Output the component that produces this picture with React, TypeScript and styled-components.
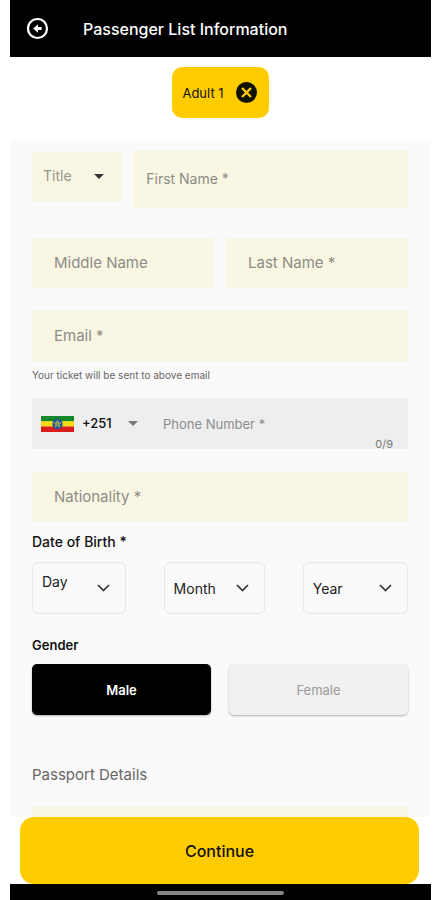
import React, { useState } from "react";
import styled, { createGlobalStyle } from "styled-components";

const GlobalStyle = createGlobalStyle`
  * { box-sizing: border-box; }
  body { margin: 0; background: #ffffff; }
  body, button, input, select { font-family: Inter, "Liberation Sans", sans-serif; }
  button { border: 0; padding: 0; cursor: pointer; }
`;

const Screen = styled.div`
  display: flex;
  flex-direction: column;
  height: 100vh;
  margin: 0 8px 0 10px;
  background: #ffffff;
`;

const Header = styled.header`
  display: flex;
  align-items: center;
  gap: 34px;
  flex: none;
  height: 57px;
  padding: 0 16px;
  background: #000000;
  color: #ffffff;
`;

const BackButton = styled.button`
  display: flex;
  background: none;
  color: #ffffff;
`;

const PageTitle = styled.h1`
  margin: 0;
  font-size: 16px;
  font-weight: 500;
  line-height: 20px;
`;

const Passengers = styled.nav`
  display: flex;
  justify-content: center;
  flex: none;
  padding: 10px 0 22px;
`;

const PassengerChip = styled.div`
  display: flex;
  align-items: center;
  gap: 12px;
  height: 51px;
  padding: 0 12px 0 10px;
  border-radius: 10px;
  background: #ffcc00;
  color: #111111;
  font-size: 13px;
`;

const RemoveButton = styled.button`
  display: flex;
  background: none;
`;

const Form = styled.form`
  flex: 1;
  min-height: 0;
  overflow-y: auto;
  scrollbar-width: none;
  padding: 10px 23px 0 22px;
  background: #fafafa;
`;

const Row = styled.div<{ $gap: number; $top?: number }>`
  display: flex;
  align-items: flex-start;
  gap: ${(p) => p.$gap}px;
  margin-top: ${(p) => p.$top ?? 0}px;
`;

const TextField = styled.input<{ $height?: number; $size?: number; $top?: number; $inset?: number }>`
  display: block;
  flex: 1;
  width: 100%;
  min-width: 0;
  height: ${(p) => p.$height ?? 50}px;
  margin-top: ${(p) => p.$top ?? 0}px;
  padding: 0 ${(p) => p.$inset ?? 22}px 2px;
  border: 0;
  border-radius: 2px;
  background: #f9f6e3;
  color: #222222;
  font-size: ${(p) => p.$size ?? 15}px;
  &::placeholder { color: #8d8c87; opacity: 1; }
`;

/* The native list and its arrow share one grid cell. */
const Picker = styled.div`
  display: grid;
  align-items: center;
  & > * { grid-area: 1 / 1; }
  & > svg { justify-self: end; pointer-events: none; }
`;

const TitlePicker = styled(Picker)`
  flex: 0 0 24%;
  margin-top: 2px;
  padding: 0 18px 2px 0;
  border-radius: 2px;
  background: #f9f6e3;
`;

const PlainSelect = styled.select<{ $strong?: boolean }>`
  appearance: none;
  width: 100%;
  height: 48px;
  padding: 0 0 2px ${(p) => (p.$strong ? 0 : 11)}px;
  border: 0;
  background: transparent;
  color: ${(p) => (p.$strong ? "#111111" : "#96958e")};
  font-size: ${(p) => (p.$strong ? 13 : 14)}px;
  font-weight: ${(p) => (p.$strong ? 500 : 400)};
`;

const Hint = styled.p`
  margin: 7px 0 0;
  color: #666666;
  font-size: 10px;
  line-height: 12px;
`;

const PhoneField = styled.div`
  display: flex;
  align-items: center;
  height: 51px;
  margin-top: 17px;
  padding-left: 9px;
  background: #eeeeee;
`;

const CodePicker = styled(Picker)`
  width: 56px;
  margin-left: 8px;
`;

const PhoneInput = styled.input`
  flex: 1;
  min-width: 0;
  height: 51px;
  margin-left: 25px;
  padding: 0;
  border: 0;
  background: transparent;
  font-size: 13px;
  &::placeholder { color: #8c8c8c; opacity: 1; }
`;

const Counter = styled.span`
  align-self: flex-end;
  padding-right: 15px;
  color: #777777;
  font-size: 11px;
  line-height: 10px;
`;

const Label = styled.h2`
  margin: 0;
  color: #111111;
  font-size: 14px;
  font-weight: 500;
  line-height: 20px;
`;

const DobLabel = styled(Label)`
  margin-top: 10px;
`;

const GenderLabel = styled(Label)`
  margin-top: 21px;
  font-size: 13px;
  font-weight: 600;
`;

const PassportHeading = styled(Label)`
  margin: 50px 0 21px;
  color: #666666;
  font-size: 15px;
  font-weight: 400;
`;

const DateRow = styled.div`
  display: flex;
  justify-content: space-between;
  margin-top: 10px;
`;

const DatePicker = styled(Picker)<{ $share: number }>`
  flex: 0 0 ${(p) => p.$share}%;
  height: 52px;
  padding-right: 15px;
  border: 1px solid #e6e6e6;
  border-radius: 6px;
`;

const DateSelect = styled.select<{ $raised?: boolean }>`
  appearance: none;
  width: 100%;
  height: 50px;
  padding: 0 0 ${(p) => (p.$raised ? 14 : 0)}px 9px;
  border: 0;
  background: transparent;
  color: #222222;
  font-size: 14px;
`;

const GenderButton = styled.button<{ $active: boolean }>`
  flex: 1;
  height: 51px;
  border-radius: 5px;
  background: ${(p) => (p.$active ? "#000000" : "#f1f1f1")};
  color: ${(p) => (p.$active ? "#ffffff" : "#9a9a9a")};
  font-size: 13px;
  font-weight: ${(p) => (p.$active ? 600 : 400)};
  box-shadow: 0 1px 2px rgba(0, 0, 0, 0.3);
`;

const Footer = styled.footer`
  flex: none;
  padding: 0 12px 0 10px;
`;

const ContinueButton = styled.button`
  display: block;
  width: 100%;
  height: 67px;
  border-radius: 14px;
  background: #ffcc00;
  color: #111111;
  font-size: 16px;
  font-weight: 500;
`;

const SystemBar = styled.div`
  display: flex;
  justify-content: center;
  flex: none;
  height: 16px;
  padding-top: 7px;
  background: #000000;
`;

const HomeHandle = styled.div`
  width: 30%;
  height: 4px;
  border-radius: 2px;
  background: #858585;
`;

const BackIcon = () => (
  <svg width="23" height="23" viewBox="0 0 23 23" fill="none" aria-hidden="true">
    <circle cx="11.5" cy="11.5" r="9.5" stroke="currentColor" strokeWidth="2.2" />
    <path d="M7.2 11.5 12 7.2v2.9h3.6v2.8H12v2.9z" fill="currentColor" />
  </svg>
);

const RemoveIcon = () => (
  <svg width="21" height="21" viewBox="0 0 21 21" aria-hidden="true">
    <circle cx="10.5" cy="10.5" r="10.5" fill="#111100" />
    <path d="m6 6 9 9m0-9-9 9" stroke="#ffcc00" strokeWidth="2.4" />
  </svg>
);

const Triangle = ({ color }: { color: string }) => (
  <svg width="10" height="5" viewBox="0 0 10 5" aria-hidden="true">
    <path d="M0 0h10L5 5z" fill={color} />
  </svg>
);

const Chevron = () => (
  <svg width="13" height="8" viewBox="0 0 13 8" fill="none" aria-hidden="true">
    <path d="m1 1 5.5 5.5L12 1" stroke="#333333" strokeWidth="1.7" />
  </svg>
);

const EthiopiaFlag = () => (
  <svg width="33" height="16" viewBox="0 0 33 16" role="img" aria-label="Ethiopia">
    <path fill="#148728" d="M0 0h33v5.4H0z" />
    <path fill="#f8dc12" d="M0 5.3h33v5.4H0z" />
    <path fill="#dc1b1b" d="M0 10.6h33V16H0z" />
    <circle cx="16.5" cy="8" r="5.2" fill="#1d54a3" />
    <path
      d="m16.5 4.3 2.3 6.8-5.9-4.2h7.2l-5.9 4.2z"
      fill="none"
      stroke="#c9bd45"
      strokeWidth="0.8"
    />
  </svg>
);

const dates = [
  { name: "Day", share: 25, raised: true, options: Array.from({ length: 31 }, (_, i) => i + 1) },
  { name: "Month", share: 27, raised: false, options: Array.from({ length: 12 }, (_, i) => i + 1) },
  { name: "Year", share: 28, raised: false, options: Array.from({ length: 90 }, (_, i) => 2024 - i) },
];

export default function App() {
  const [gender, setGender] = useState("Male");
  const [phone, setPhone] = useState("");

  return (
    <>
      <GlobalStyle />
      <Screen>
        <Header>
          <BackButton type="button" aria-label="Back"><BackIcon /></BackButton>
          <PageTitle>Passenger List Information</PageTitle>
        </Header>
        <Passengers aria-label="Passengers">
          <PassengerChip>
            Adult 1
            <RemoveButton type="button" aria-label="Remove Adult 1"><RemoveIcon /></RemoveButton>
          </PassengerChip>
        </Passengers>
        <Form id="passenger" onSubmit={(e) => e.preventDefault()}>
          <Row $gap={11}>
            <TitlePicker>
              <PlainSelect aria-label="Title" defaultValue="">
                <option value="">Title</option>
                <option>Mr</option>
                <option>Mrs</option>
                <option>Ms</option>
              </PlainSelect>
              <Triangle color="#333333" />
            </TitlePicker>
            <TextField aria-label="First Name" placeholder="First Name *" $height={58} $size={14} $inset={13} />
          </Row>
          <Row $gap={12} $top={30}>
            <TextField aria-label="Middle Name" placeholder="Middle Name" />
            <TextField aria-label="Last Name" placeholder="Last Name *" />
          </Row>
          <TextField type="email" aria-label="Email" placeholder="Email *" $height={52} $top={22} />
          <Hint>Your ticket will be sent to above email</Hint>
          <PhoneField>
            <EthiopiaFlag />
            <CodePicker>
              <PlainSelect $strong aria-label="Country code">
                <option>+251</option>
              </PlainSelect>
              <Triangle color="#777777" />
            </CodePicker>
            <PhoneInput
              type="tel"
              aria-label="Phone Number"
              placeholder="Phone Number *"
              maxLength={9}
              value={phone}
              onChange={(e) => setPhone(e.target.value)}
            />
            <Counter>{phone.length}/9</Counter>
          </PhoneField>
          <TextField aria-label="Nationality" placeholder="Nationality *" $top={23} />
          <DobLabel>Date of Birth *</DobLabel>
          <DateRow>
            {dates.map((d) => (
              <DatePicker key={d.name} $share={d.share}>
                <DateSelect aria-label={d.name} $raised={d.raised} defaultValue="">
                  <option value="">{d.name}</option>
                  {d.options.map((o) => <option key={o}>{o}</option>)}
                </DateSelect>
                <Chevron />
              </DatePicker>
            ))}
          </DateRow>
          <GenderLabel>Gender</GenderLabel>
          <Row $gap={18} $top={9}>
            {["Male", "Female"].map((g) => (
              <GenderButton
                key={g}
                type="button"
                aria-pressed={gender === g}
                $active={gender === g}
                onClick={() => setGender(g)}
              >
                {g}
              </GenderButton>
            ))}
          </Row>
          <PassportHeading>Passport Details</PassportHeading>
          <TextField aria-label="Passport Number" />
        </Form>
        <Footer>
          <ContinueButton type="submit" form="passenger">Continue</ContinueButton>
        </Footer>
        <SystemBar><HomeHandle /></SystemBar>
      </Screen>
    </>
  );
}
